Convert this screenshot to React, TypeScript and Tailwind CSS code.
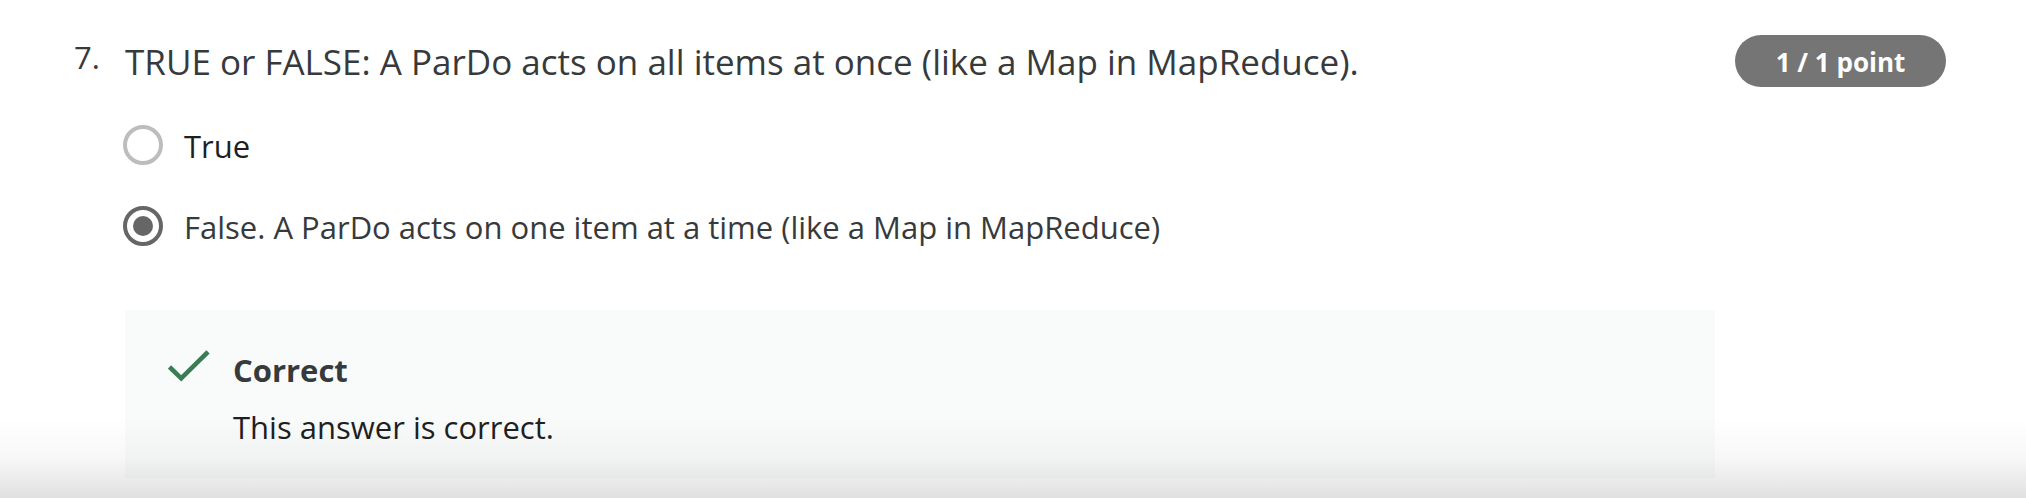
type OptionProps = { id: string; label: string; tone: string; defaultChecked?: boolean };

function Option({ id, label, tone, defaultChecked }: OptionProps) {
  return (
    <div className="flex items-start gap-[21px]">
      <input
        type="radio"
        id={id}
        name="question-7"
        defaultChecked={defaultChecked}
        className="mt-[3px] -ml-0.5 grid size-10 shrink-0 appearance-none place-items-center rounded-full border-4 border-[#bdbdbd] bg-white before:size-5 before:rounded-full before:content-[''] checked:border-[#666666] checked:before:bg-[#666666]"
      />
      <label htmlFor={id} className={`text-[31px] leading-[48px] ${tone}`}>
        {label}
      </label>
    </div>
  );
}

export default function App() {
  return (
    <main className="relative bg-white pt-[35px] pr-20 pb-5 pl-[74px] font-['Open_Sans',sans-serif] text-[#373a3c]">
      <div className="flex items-start">
        <span className="w-[51px] shrink-0 text-[31px] leading-[44px]">7.</span>
        <fieldset className="min-w-0 flex-1">
          <legend className="text-[35px] leading-[54px]">
            TRUE or FALSE: A ParDo acts on all items at once (like a Map in MapReduce).
          </legend>
          <div className="mt-[33px] flex flex-col gap-[33px]">
            <Option id="option-true" label="True" tone="text-[#1f1f1f]" />
            <Option
              id="option-false"
              label="False. A ParDo acts on one item at a time (like a Map in MapReduce)"
              tone="text-[#373a3c]"
              defaultChecked
            />
          </div>
          <section className="mt-[59px] flex items-start bg-[#f8fbfa] pt-9 pb-[27px] pl-[43px]">
            <svg viewBox="0 0 42 32" className="mt-1 h-8 w-[42px] shrink-0" fill="none" aria-hidden="true">
              <path d="M1.5 17 13.2 28.3 40 1.8" stroke="#3a7d54" strokeWidth="4.6" />
            </svg>
            <div className="ml-[23px] flex flex-col gap-[9px] text-[31px] leading-[48px]">
              <h2 className="font-bold">Correct</h2>
              <p className="text-[#1f1f1f]">This answer is correct.</p>
            </div>
          </section>
        </fieldset>
        <span className="ml-5 w-[211px] shrink-0 rounded-full bg-[#757575] pt-0.5 text-center text-[26px] leading-[50px] font-bold text-white">
          1 / 1 point
        </span>
      </div>
      <div className="pointer-events-none absolute inset-x-0 bottom-0 h-20 bg-linear-to-b from-black/0 via-black/3 to-black/12" />
    </main>
  );
}
